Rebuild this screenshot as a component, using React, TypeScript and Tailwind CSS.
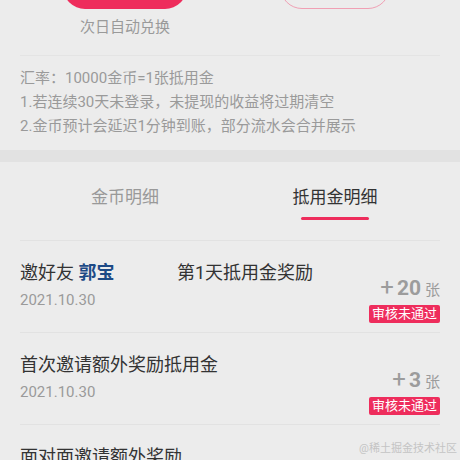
const font = { fontFamily: 'Roboto, "Noto Sans CJK SC", "Noto Sans", sans-serif' }

type Row = { title: React.ReactNode; date: string; amount: string }

const rows: Row[] = [
  {
    title: (
      <>
        <span className="inline-block w-[157px]">
          邀好友 <span className="font-bold text-[#1d4a86]">郭宝</span>
        </span>
        第1天抵用金奖励
      </>
    ),
    date: '2021.10.30',
    amount: '20',
  },
  { title: '首次邀请额外奖励抵用金', date: '2021.10.30', amount: '3' },
  { title: '面对面邀请额外奖励', date: '2021.10.30', amount: '5' },
]

function RecordRow({ row }: { row: Row }) {
  return (
    <div className="flex justify-between border-t border-[#e2e2e2] h-[92px]">
      <div className="flex flex-col pt-[21px]">
        <div className="text-[18px] leading-[22px] text-[#333]">{row.title}</div>
        <div className="mt-[6px] text-[15px] leading-[20px] text-[#9a9a9a]">{row.date}</div>
      </div>
      <div className="flex flex-col items-end pt-[34px]">
        <div className="flex items-baseline text-[#9c9c9c] leading-[24px]">
          <span className="text-[24px] font-normal">+</span>
          <span className="ml-[3px] text-[21px] font-bold">{row.amount}</span>
          <span className="ml-[4px] text-[15px]">张</span>
        </div>
        <div className="mt-[3px] h-[18px] px-[3px] rounded-[2px] bg-[#ee2d5c] text-white text-[13px] leading-[18px]">
          审核未通过
        </div>
      </div>
    </div>
  )
}

export default function App() {
  return (
    <div className="relative w-[460px] h-[460px] overflow-hidden bg-[#ececec]" style={font}>
      {/* top: exchange buttons (scrolled mostly out of view) */}
      <div className="px-5">
        <div className="grid grid-cols-2">
          <div className="flex flex-col items-center">
            <div className="-mt-[35px] h-[44px] w-[124px] rounded-[22px] bg-[#ee2d5c]" />
            <div className="mt-[8px] text-[15px] leading-[20px] text-[#9a9a9a]">次日自动兑换</div>
          </div>
          <div className="flex flex-col items-center">
            <div className="-mt-[35px] h-[44px] w-[110px] rounded-[22px] border border-[#f0a0b4]" />
          </div>
        </div>

        <div className="mt-[18px] border-t border-[#e4e4e4] pt-[10px] pb-[12px] text-[15px] leading-[24px] text-[#9a9a9a]">
          <div>汇率：10000金币=1张抵用金</div>
          <div>1.若连续30天未登录，未提现的收益将过期清空</div>
          <div>2.金币预计会延迟1分钟到账，部分流水会合并展示</div>
        </div>
      </div>

      <div className="h-[12px] bg-[#e2e2e2]" />

      {/* tabs */}
      <div className="px-5">
        <div className="grid grid-cols-2 h-[78px]">
          <div className="flex flex-col items-center pt-[24px]">
            <span className="text-[17px] leading-[22px] text-[#999]">金币明细</span>
          </div>
          <div className="flex flex-col items-center pt-[24px]">
            <span className="text-[17px] leading-[22px] text-[#333]">抵用金明细</span>
            <span className="mt-[9px] h-[3px] w-[68px] rounded-full bg-[#ee2d5c]" />
          </div>
        </div>

        {rows.map((r, i) => (
          <RecordRow key={i} row={r} />
        ))}
      </div>

      <div className="absolute right-[3px] bottom-[4px] text-[11px] leading-[14px] text-[#c4c4c4]">
        @稀土掘金技术社区
      </div>
    </div>
  )
}
